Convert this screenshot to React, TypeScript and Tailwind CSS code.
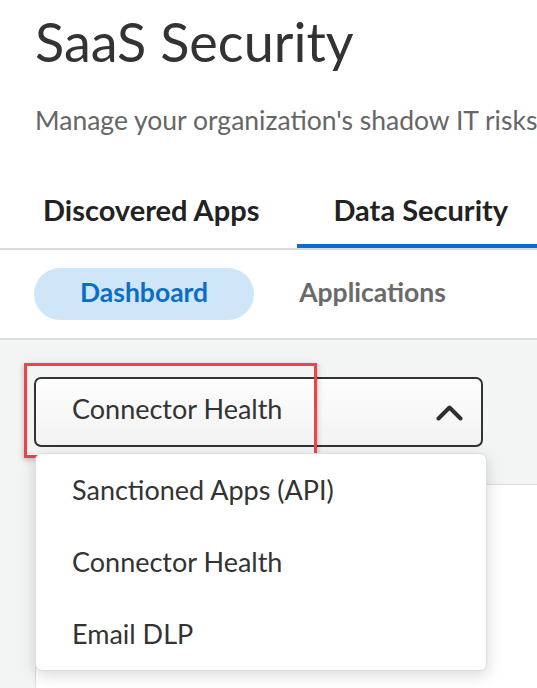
const menuItems = ['Sanctioned Apps (API)', 'Connector Health', 'Email DLP'];

function ChevronUp() {
  return (
    <svg width="27" height="17" viewBox="0 0 27 17" fill="none">
      <path d="M2.5 14.5 L13.5 3.5 L24.5 14.5" stroke="#2f2f2f" strokeWidth="4" strokeLinecap="round" strokeLinejoin="round" />
    </svg>
  );
}

export default function App() {
  return (
    <div className="relative w-[537px] h-[688px] overflow-hidden bg-white font-['Lato',sans-serif] text-[#333]">
      {/* Header */}
      <div className="pl-[35px] pt-[10px]">
        <h1 className="text-[54px] leading-[64px] font-normal text-[#333] whitespace-nowrap">SaaS Security</h1>
        <p className="mt-[30px] text-[26.5px] leading-[32px] text-[#666] whitespace-nowrap">
          Manage your organization's shadow IT risks
        </p>
      </div>

      {/* Tabs */}
      <div className="mt-[54px] flex pl-[5px] border-b-2 border-[#dcdcdc]">
        <div className="px-[38px] pb-[14px] border-b-4 border-transparent text-[29px] leading-[40px] font-bold text-[#222] whitespace-nowrap">
          Discovered Apps
        </div>
        <div className="pl-[36px] pr-[38px] pb-[14px] border-b-4 border-[#0a6dcc] text-[29px] leading-[40px] font-bold text-[#222] whitespace-nowrap w-[260px]">
          Data Security
        </div>
      </div>

      {/* Sub tabs */}
      <div className="flex pl-[34px] pt-[18px] pb-[18px] border-b-2 border-[#dcdcdc]">
        <div className="h-[52px] px-[46px] pb-[4px] rounded-full bg-[#cfe6f9] text-[26.5px] leading-[48px] font-bold text-[#0b6dc8]">
          Dashboard
        </div>
        <div className="h-[52px] px-[45px] pb-[4px] text-[26.5px] leading-[48px] font-bold text-[#6a6a6a]">
          Applications
        </div>
      </div>

      {/* Content */}
      <div className="bg-[#f3f4f4] h-[400px] pt-[37px]">
        <div className="ml-[34px] w-[449px] h-[70px] rounded-[7px] border-2 border-[#333] bg-gradient-to-b from-[#fdfdfd] to-[#f3f3f3] flex items-center justify-between pl-[36px] pr-[18px]">
          <span className="text-[27px] leading-[28px] pb-[6px] text-[#333]">Connector Health</span>
          <ChevronUp />
        </div>
        <div className="mt-[37px] ml-[35px] h-[300px] bg-white border-l border-t border-[#dcdcdc]" />
      </div>

      {/* Annotation box */}
      <div className="absolute left-[24px] top-[363px] w-[293px] h-[95px] border-[3px] border-[#ef4347] shadow-[0_2px_6px_rgba(0,0,0,0.25)]" />

      {/* Open menu */}
      <div className="absolute left-[35px] top-[453px] w-[452px] bg-white rounded-[7px] border border-[#dedede] shadow-[0_4px_16px_rgba(0,0,0,0.16)]">
        {menuItems.map((item) => (
          <div key={item} className="h-[72px] pl-[36px] flex items-center text-[27px] leading-[72px] text-[#333] whitespace-nowrap">
            {item}
          </div>
        ))}
      </div>
    </div>
  );
}
